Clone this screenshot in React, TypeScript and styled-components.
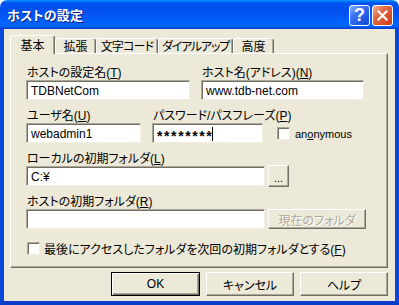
import styled, { createGlobalStyle } from "styled-components";

const uiFont = `"Liberation Sans", "Noto Sans CJK JP", sans-serif`;

const GlobalStyle = createGlobalStyle`
  html, body {
    margin: 0;
    background: #ffffff;
  }
  body {
    font-family: ${uiFont};
    font-size: 12px;
    font-feature-settings: "palt";
    color: #000;
  }
`;

type WidthProps = { $w: number };
type TabProps = { $w: number; $active?: boolean; $ls: number };
type RowProps = { $gap: number };

const Window = styled.div`
  width: 399px;
  height: 305px;
  display: flex;
  flex-direction: column;
`;

const TitleBar = styled.div`
  height: 29px;
  box-sizing: border-box;
  padding: 0 6px 0 7px;
  display: flex;
  align-items: center;
  justify-content: space-between;
  border-radius: 7px 7px 0 0;
  background: linear-gradient(
    #0997ff 0%,
    #0053ee 10%,
    #0050ee 40%,
    #0066ff 86%,
    #0062fb 92%,
    #0048dd 96%,
    #003dd7 100%
  );
`;

const TitleText = styled.span`
  color: #fff;
  font-weight: bold;
  font-size: 13px;
  font-family: "Noto Sans CJK JP", sans-serif;
  text-shadow: 1px 1px 0 #0a1883;
  letter-spacing: 0.2px;
`;

const TitleButtons = styled.div`
  display: flex;
  gap: 2px;
  margin-top: 2px;
`;

const CaptionButton = styled.div<{ $kind: "help" | "close" }>`
  width: 21px;
  height: 21px;
  box-sizing: border-box;
  border: 1px solid #fff;
  border-radius: 3px;
  display: flex;
  align-items: center;
  justify-content: center;
  color: #fff;
  font-weight: bold;
  font-size: 18px;
  font-family: "Liberation Sans", sans-serif;
  background: ${({ $kind }) =>
    $kind === "help"
      ? "linear-gradient(135deg, #8db3fb 0%, #3d75f0 35%, #2158e4 70%, #1a48d0 100%)"
      : "linear-gradient(135deg, #f3b39b 0%, #e46a45 35%, #d8502b 70%, #c43d18 100%)"};
`;

const Frame = styled.div`
  flex: 1;
  display: flex;
  flex-direction: column;
  box-sizing: border-box;
  background: #ece9d8;
  border: 4px solid #0846dc;
  border-top: 0;
  border-bottom-color: #0a3cc8;
  padding: 6px 7px 5px 6px;
`;

const TabStrip = styled.div`
  height: 18px;
  display: flex;
  align-items: flex-end;
  position: relative;
  z-index: 1;
`;

const Tab = styled.div<TabProps>`
  width: ${({ $w }) => $w}px;
  height: ${({ $active }) => ($active ? 19 : 15)}px;
  margin-bottom: ${({ $active }) => ($active ? -1 : 0)}px;
  box-sizing: border-box;
  background: #ece9d8;
  border-top: 1px solid #fff;
  border-left: 1px solid #fff;
  border-right: 1px solid #716f64;
  box-shadow: inset -1px 0 0 #aca899;
  border-radius: 3px 3px 0 0;
  padding-top: ${({ $active }) => ($active ? 3 : 1)}px;
  line-height: 14px;
  text-align: center;
  white-space: nowrap;
  overflow: hidden;
  font-size: 12px;
  letter-spacing: ${({ $ls }) => $ls}px;
`;

const Panel = styled.div`
  height: 215px;
  box-sizing: border-box;
  border-top: 1px solid #fff;
  border-left: 1px solid #fff;
  border-right: 1px solid #716f64;
  border-bottom: 1px solid #716f64;
  box-shadow: inset -1px -1px 0 #aca899;
  padding: 12px 0 0 15px;
  display: flex;
  flex-direction: column;
  gap: 9px;
`;

const Row = styled.div<RowProps>`
  display: flex;
  align-items: flex-end;
  gap: ${({ $gap }) => $gap}px;
`;

const Group = styled.div<WidthProps>`
  width: ${({ $w }) => $w}px;
  display: flex;
  flex-direction: column;
`;

const Label = styled.div`
  height: 14px;
  line-height: 14px;
  padding-left: 1px;
  white-space: nowrap;
  font-size: 12px;
`;

const Field = styled.div<WidthProps>`
  width: ${({ $w }) => $w}px;
  height: 20px;
  box-sizing: border-box;
  background: #fff;
  border: 1px solid;
  border-color: #aca899 #f1efe2 #f1efe2 #aca899;
  box-shadow: inset 1px 1px 0 #716f64;
  padding: 1px 0 0 4px;
  display: flex;
  align-items: center;
  font-family: "Liberation Sans", sans-serif;
  font-size: 12px;
  white-space: nowrap;
`;

const Secret = styled.span`
  letter-spacing: 1.6px;
  font-size: 14px;
  font-weight: bold;
  padding-top: 4px;
`;

const Caret = styled.span`
  display: inline-block;
  width: 1px;
  height: 14px;
  background: #000;
  margin-left: -1px;
`;

const FieldRow = styled.div`
  display: flex;
  align-items: center;
  gap: 3px;
  height: 20px;
`;

const PushButton = styled.div<WidthProps & { $h?: number; $default?: boolean; $disabled?: boolean }>`
  width: ${({ $w }) => $w}px;
  height: ${({ $h }) => $h ?? 24}px;
  flex: none;
  box-sizing: border-box;
  background: #ece9d8;
  display: flex;
  align-items: center;
  justify-content: center;
  font-size: 12px;
  white-space: nowrap;
  border: 1px solid;
  border-color: ${({ $default }) =>
    $default ? "#000" : "#fff #716f64 #716f64 #fff"};
  box-shadow: ${({ $default }) =>
    $default
      ? "inset 1px 1px 0 #fff, inset -1px -1px 0 #716f64, inset -2px -2px 0 #aca899"
      : "inset -1px -1px 0 #aca899"};
  color: ${({ $disabled }) => ($disabled ? "#aca899" : "#000")};
  text-shadow: ${({ $disabled }) => ($disabled ? "1px 1px 0 #fff" : "none")};
`;

const Dots = styled.span`
  font-family: "Liberation Sans", sans-serif;
  font-size: 11px;
  padding-top: 4px;
`;

const Check = styled.label`
  display: flex;
  align-items: center;
  gap: 5px;
  white-space: nowrap;
`;

const CheckBox = styled.span`
  width: 13px;
  height: 13px;
  box-sizing: border-box;
  flex: none;
  background: #fff;
  border: 1px solid;
  border-color: #aca899 #f1efe2 #f1efe2 #aca899;
  box-shadow: inset 1px 1px 0 #716f64;
`;

const AnonText = styled.span`
  font-family: "Liberation Sans", sans-serif;
  font-size: 11px;
`;

const AnonCheck = styled(Check)`
  margin: 0 0 3px 3px;
`;

const LastCheck = styled(Check)`
  margin: 2px 0 0 1px;
  gap: 4px;
  font-size: 12px;
`;

const ButtonRow = styled.div`
  display: flex;
  justify-content: flex-end;
  gap: 6px;
  margin-top: 4px;
`;

const tabs = [
  { name: "基本", w: 45, ls: 0 },
  { name: "拡張", w: 41, ls: 0 },
  { name: "文字コード", w: 62, ls: -0.8 },
  { name: "ダイアルアップ", w: 75, ls: -1.2 },
  { name: "高度", w: 41, ls: 0 },
];

export default function App() {
  return (
    <>
      <GlobalStyle />
      <Window>
        <TitleBar>
          <TitleText>ホストの設定</TitleText>
          <TitleButtons>
            <CaptionButton $kind="help">?</CaptionButton>
            <CaptionButton $kind="close">
              <svg width="11" height="11" viewBox="0 0 11 11">
                <path
                  d="M1.5 1.5 L9.5 9.5 M9.5 1.5 L1.5 9.5"
                  stroke="#fff"
                  strokeWidth="2.2"
                  strokeLinecap="square"
                />
              </svg>
            </CaptionButton>
          </TitleButtons>
        </TitleBar>
        <Frame>
          <TabStrip>
            {tabs.map((t, i) => (
              <Tab key={t.name} $w={t.w} $ls={t.ls} $active={i === 0}>
                {t.name}
              </Tab>
            ))}
          </TabStrip>
          <Panel>
            <Row $gap={11}>
              <Group $w={164}>
                <Label>
                  ホストの設定名(<u>T</u>)
                </Label>
                <Field $w={164}>TDBNetCom</Field>
              </Group>
              <Group $w={163}>
                <Label>
                  ホスト名(アドレス)(<u>N</u>)
                </Label>
                <Field $w={163}>www.tdb-net.com</Field>
              </Group>
            </Row>
            <Row $gap={11}>
              <Group $w={115}>
                <Label>
                  ユーザ名(<u>U</u>)
                </Label>
                <Field $w={115}>webadmin1</Field>
              </Group>
              <Group $w={111}>
                <Label>
                  パスワード/パスフレーズ(<u>P</u>)
                </Label>
                <Field $w={111}>
                  <Secret>********</Secret>
                  <Caret />
                </Field>
              </Group>
              <AnonCheck>
                <CheckBox />
                <AnonText>
                  an<u>o</u>nymous
                </AnonText>
              </AnonCheck>
            </Row>
            <Row $gap={0}>
              <Group $w={263}>
                <Label>
                  ローカルの初期フォルダ(<u>L</u>)
                </Label>
                <FieldRow>
                  <Field $w={239}>C:¥</Field>
                  <PushButton $w={21} $h={22}>
                    <Dots>...</Dots>
                  </PushButton>
                </FieldRow>
              </Group>
            </Row>
            <Row $gap={0}>
              <Group $w={340}>
                <Label>
                  ホストの初期フォルダ(<u>R</u>)
                </Label>
                <FieldRow>
                  <Field $w={239} />
                  <PushButton $w={98} $h={20} $disabled>
                    現在のフォルダ
                  </PushButton>
                </FieldRow>
              </Group>
            </Row>
            <LastCheck>
              <CheckBox />
              <span>
                最後にアクセスしたフォルダを次回の初期フォルダとする(<u>F</u>)
              </span>
            </LastCheck>
          </Panel>
          <ButtonRow>
            <PushButton $w={89} $default>
              OK
            </PushButton>
            <PushButton $w={88}>キャンセル</PushButton>
            <PushButton $w={88}>ヘルプ</PushButton>
          </ButtonRow>
        </Frame>
      </Window>
    </>
  );
}
